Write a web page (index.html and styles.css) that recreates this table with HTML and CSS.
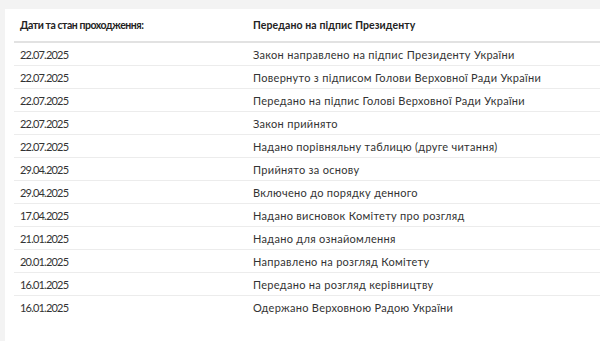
FILE: index.html
```html
<!DOCTYPE html>
<html lang="uk">
<head>
<meta charset="utf-8">
<link rel="stylesheet" href="styles.css">
</head>
<body>
<div class="panel">
<table class="stages">
<thead>
<tr><th class="c1">Дати та стан проходження:</th><th class="c2">Передано на підпис Президенту</th></tr>
</thead>
<tbody>
<tr><td class="date">22.07.2025</td><td>Закон направлено на підпис Президенту України</td></tr>
<tr><td class="date">22.07.2025</td><td>Повернуто з підписом Голови Верховної Ради України</td></tr>
<tr><td class="date">22.07.2025</td><td>Передано на підпис Голові Верховної Ради України</td></tr>
<tr><td class="date">22.07.2025</td><td>Закон прийнято</td></tr>
<tr><td class="date">22.07.2025</td><td>Надано порівняльну таблицю (друге читання)</td></tr>
<tr><td class="date">29.04.2025</td><td>Прийнято за основу</td></tr>
<tr><td class="date">29.04.2025</td><td>Включено до порядку денного</td></tr>
<tr><td class="date">17.04.2025</td><td>Надано висновок Комітету про розгляд</td></tr>
<tr><td class="date">21.01.2025</td><td>Надано для ознайомлення</td></tr>
<tr><td class="date">20.01.2025</td><td>Направлено на розгляд Комітету</td></tr>
<tr><td class="date">16.01.2025</td><td>Передано на розгляд керівництву</td></tr>
<tr><td class="date">16.01.2025</td><td>Одержано Верховною Радою України</td></tr>
</tbody>
</table>
</div>
</body>
</html>
```

FILE: styles.css
```css
html, body {
  margin: 0;
  padding: 0;
  background: #f3f3f3;
  height: 100%;
  overflow: hidden;
}
body {
  font-family: Lato, "Open Sans", sans-serif;
  color: #333;
  font-size: 11px;
}
.panel {
  margin: 9px 0 0 5px;
  background: #fff;
  padding: 0 0 0 9px;
  min-height: 340px;
}
.stages {
  border-collapse: collapse;
  width: 600px;
}
.stages th {
  text-align: left;
  font-weight: 700;
  font-size: 10.5px;
  height: 32px;
  padding: 0 6px;
  border-bottom: 2px solid #e2e2e2;
  color: #222;
}
.stages th.c1 {
  width: 227px;
  letter-spacing: -0.45px;
}
.stages th.c2 {
  padding-left: 0;
  letter-spacing: 0.1px;
}
.stages td {
  line-height: 21px;
  padding: 1px 0 0 6px;
  border-bottom: 1px solid #ececec;
  white-space: nowrap;
  letter-spacing: 0.3px;
}
.stages td + td {
  padding-left: 0;
}
.stages td.date {
  letter-spacing: -0.8px;
}
.stages tbody tr:last-child td {
  border-bottom: none;
}
```
